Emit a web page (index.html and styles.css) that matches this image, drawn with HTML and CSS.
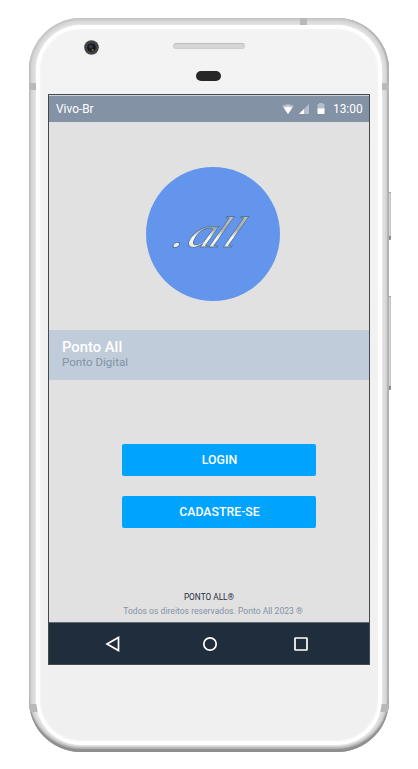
FILE: index.html
```html
<!DOCTYPE html>
<html lang="pt-BR">
<head>
<meta charset="utf-8">
<title>Ponto All</title>
<link rel="stylesheet" href="styles.css">
</head>
<body>
<div class="phone">
  <i class="key power"></i><i class="key volume"></i>
  <div class="metal">
    <i class="seam seam-left"></i><i class="seam seam-right"></i><i class="seam seam-top"></i>
    <i class="seam seam-left low"></i><i class="seam seam-right low"></i>
    <div class="face">
      <div class="hardware">
        <svg class="camera" viewBox="0 0 15 15"><circle cx="7.5" cy="7.5" r="7.3" fill="#414244"/><circle cx="7.5" cy="7.5" r="4.3" fill="#171819"/><circle cx="6.8" cy="6.5" r="2" fill="#343b45"/><circle cx="8.6" cy="10" r="1" fill="#777b38"/></svg>
        <span class="speaker"></span>
        <span class="sensor"></span>
      </div>
      <main class="screen">
        <div class="status">
          <span class="carrier">Vivo-Br</span>
          <svg class="wifi" viewBox="0 0 12 10"><path d="M.2 2Q6-1.6 11.8 2L6 10Z" fill="#b7c0cf"/><path d="M1.7 3.8Q6 1.7 10.3 3.8L6 10Z" fill="#fff"/></svg>
          <svg class="signal" viewBox="0 0 10 10"><path d="M10 0V10H0Z" fill="#b5becd"/><path d="M5 5V10H0Z" fill="#fff"/></svg>
          <svg class="battery" viewBox="0 0 8 11"><path d="M2 0H6V1H7.5V6H.5V1H2Z" fill="#b5becd"/><path d="M.5 5.5H7.5V10.2Q7.5 11 6.7 11H1.3Q.5 11 .5 10.2Z" fill="#fff"/></svg>
          <span class="time">13:00</span>
        </div>
        <section class="hero">
          <svg class="logo" viewBox="0 0 134 134">
            <defs><linearGradient id="silver" x1="0" y1="0" x2="0" y2="1"><stop offset="0" stop-color="#c7c9cc"/><stop offset=".45" stop-color="#a9adb3"/><stop offset=".62" stop-color="#fff"/><stop offset="1" stop-color="#c5c8cd"/></linearGradient></defs>
            <circle cx="67" cy="67" r="67" fill="#6495ed"/>
            <text class="logo-text" transform="translate(24 80) skewX(-26) scale(1.2 1)" x="0 12 30 42">.all</text>
          </svg>
        </section>
        <section class="banner"><h1>Ponto All</h1><p>Ponto Digital</p></section>
        <section class="actions"><button>LOGIN</button><button>CADASTRE-SE</button></section>
        <footer><p class="brand">PONTO ALL®</p><p class="rights">Todos os direitos reservados. Ponto All 2023 ®</p></footer>
        <nav>
          <svg viewBox="0 0 16 16"><path d="M13.5 1.4V14.6L2 8Z"/></svg>
          <svg viewBox="0 0 16 16"><circle cx="8" cy="8" r="6.2"/></svg>
          <svg viewBox="0 0 16 16"><rect x="2" y="2" width="12" height="12" rx=".6"/></svg>
        </nav>
      </main>
    </div>
  </div>
</div>
</body>
</html>
```
FILE: styles.css
```css
* { box-sizing: border-box; }
body { margin: 0; background: #fff; font-family: Roboto, sans-serif; overflow: hidden; }
h1, p { margin: 0; }
svg { display: block; }
.phone { position: relative; width: 359.5px; height: 734px; margin: 18px 0 0 29px; }
.metal {
  position: relative; height: 734px; padding: 7px; border-radius: 52px; overflow: hidden; background: #e6e6e6;
  box-shadow: inset 0 -3px 1px #8e8e8e, inset 0 -5px 2px #b4b4b4, inset -2px 0 1px #b4b4b4, inset 0 0 0 2px #c8c8c8, inset 0 0 1px 4px #d5d5d5, inset 0 0 1px 6px #dedede;
}
.face {
  height: 720px; padding: 0 11px 0 12px; border-radius: 45px;
  background: linear-gradient(#f3f3f3, #f0f0f0);
  box-shadow: inset 0 0 2px 4px #fff;
}
.key { position: absolute; left: 358px; width: 4px; border-radius: 0 1px 1px 0; background: linear-gradient(90deg, #aaa, #e0e0e0 50%, #bcbcbc); border-top: 1px solid #999; border-bottom: 4px solid #8a8a8a; }
.power { top: 174px; height: 48px; }
.volume { top: 278px; height: 94px; }
.seam { position: absolute; width: 7px; height: 7px; background: #b9b9b9; }
.seam-left { left: 0; top: 65px; }
.seam-right { right: 0; top: 65px; }
.seam-top { left: 271px; top: 0; }
.low { top: 686px; height: 8px; }
.seam-left.low { transform: skewX(10deg); width: 8px; }
.seam-right.low { transform: skewX(-10deg); width: 8px; }
.hardware { height: 69px; display: grid; grid-template-columns: 36px 89px 72px 1fr; grid-template-rows: 46px 10px; }
.camera { grid-column: 1 / 3; width: 15px; height: 15px; margin: 14.5px 0 0 35.5px; }
.speaker { grid-column: 3; width: 72px; height: 6px; margin-top: 18px; border: 1px solid #cdcdcd; border-top-color: #bdbdbd; border-radius: 3px; background: #d6d6d6; }
.sensor { grid-column: 3; grid-row: 2; width: 25px; height: 10px; margin-left: 23px; border-radius: 5px; background: #272727; }
.screen { width: 322px; height: 571px; border: 1px solid #46484b; background: #e1e1e1; display: flex; flex-direction: column; }
.status { height: 27px; flex: none; display: flex; align-items: center; padding: 0 6px 1px 7px; border-top: 1px solid #cbd1da; background: #8492a6; color: #fff; font-size: 11.9px; }
.carrier { flex: 1; }
.wifi { width: 12px; height: 10px; margin-right: 5px; }
.signal { width: 10px; height: 10px; margin-right: 8px; }
.battery { width: 8px; height: 11px; margin-right: 8px; }
.time { width: 30px; white-space: nowrap; }
.hero { height: 208px; flex: none; display: flex; justify-content: center; padding: 44.5px 0 0 8px; }
.logo { width: 134px; height: 134px; }
.logo-text { font: italic 44px "Liberation Serif", serif; fill: url(#silver); stroke: #527795; stroke-width: .8px; }
.banner { height: 50px; flex: none; padding: 9px 13px; background: #c0ccda; color: #8492a6; font-size: 11.6px; line-height: 12px; }
.banner h1 { color: #fff; font-size: 14.8px; line-height: 17px; font-weight: 500; }
.actions { height: 211px; flex: none; padding: 64px 0 0 72.5px; display: flex; flex-direction: column; gap: 20px; }
button { width: 194px; height: 32px; padding: 0 0 0 2px; border: 0; border-radius: 2px; background: #00a4ff; color: #fff; font: 500 12.3px Roboto, sans-serif; }
footer { flex: 1; text-align: center; font-size: 8.6px; line-height: 12px; color: #8492a6; }
.brand { color: #1f2d3d; font-size: 8.3px; }
.rights { margin-top: 2px; padding-left: 8px; }
nav { height: 42px; flex: none; display: flex; align-items: center; justify-content: space-between; padding: 0 60px 0 56px; border-top: 1px solid #606871; background: #1f2d3d; }
nav svg { width: 16px; height: 16px; fill: none; stroke: #fff; stroke-width: 1.7; }
nav svg:nth-child(2) { margin-left: 5px; }
```
